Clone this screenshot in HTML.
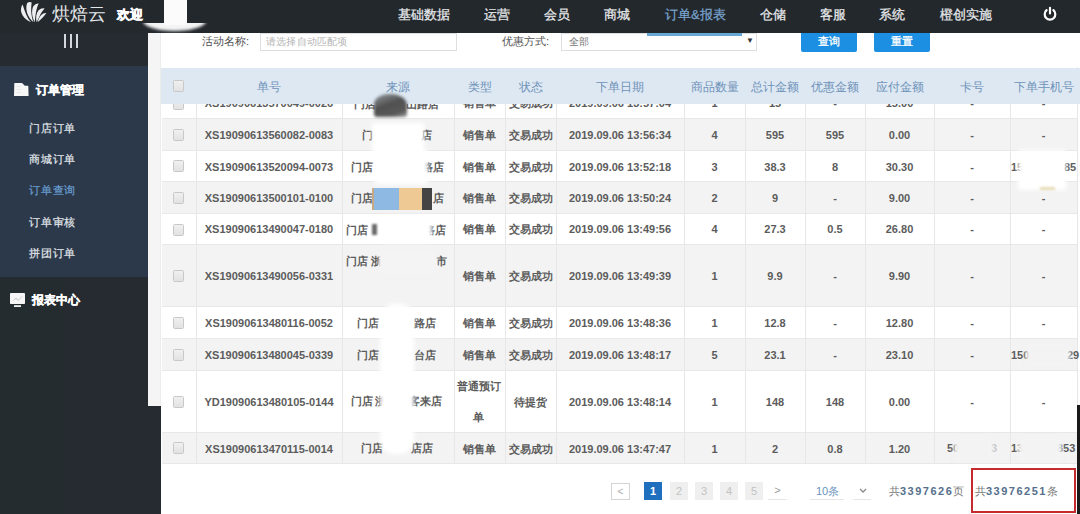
<!DOCTYPE html>
<html><head><meta charset="utf-8">
<style>
*{margin:0;padding:0;box-sizing:border-box}
html,body{width:1080px;height:514px;overflow:hidden;background:#fff;font-family:"Liberation Sans",sans-serif;position:relative}
.a{position:absolute;white-space:nowrap}
.nav{top:6px;font-size:13px;color:#e8eaec;line-height:17px;-webkit-text-stroke:0.25px}
.sub{font-size:11.4px;letter-spacing:0.8px;color:#e2e6ea;line-height:14px;left:29px;-webkit-text-stroke:0.2px}
.th{top:79.5px;font-size:12px;color:#6f92b8;line-height:15px;text-align:center}
.td{font-size:11px;font-weight:bold;color:#5c5c5c;text-align:center;line-height:14px}
.tds{font-size:11px;font-weight:bold;color:#5c5c5c;line-height:14px}
.cb{display:block;width:11px;height:12px;border:1px solid #c8c8c8;border-radius:1.5px;background:linear-gradient(#f0f0f0,#e2e2e2)}
.red{background:#fff;filter:blur(2px)}
</style></head><body>
<!-- sidebar -->
<div class="a" style="left:0;top:0;width:148px;height:66px;background:#252b31"></div>
<div class="a" style="left:0;top:66px;width:148px;height:211px;background:#2c394a"></div>
<div class="a" style="left:0;top:277px;width:161px;height:237px;background:#262b31"></div>
<div class="a" style="left:0;top:277px;width:63px;height:237px;background:#242c2f"></div>
<div class="a" style="left:148px;top:33px;width:13px;height:373px;background:#f5f5f6;border-right:1px solid #ececec"></div>
<!-- top bar -->
<div class="a" style="left:0;top:0;width:1080px;height:33px;background:#23282d"></div>
<div class="a" style="left:0;top:0;width:148px;height:33px;background:#24292e"></div>

<!-- logo -->
<svg class="a" style="left:0;top:0" width="60" height="30" viewBox="0 0 60 30">
<g fill="#eceef0">
<path d="M22.6,4.5 C19.5,9 20,17 31,22.3 C27,18 25,12 22.6,4.5 Z"/>
<path d="M27.2,3 Q29.2,1.4 31.7,2.4 C30.8,8 30.8,15 33.5,22.3 C27.5,17 24.8,9 27.2,3 Z"/>
<path d="M33.3,6.2 Q35.5,3 38.7,3.5 C36.4,8 35.4,15 34.8,22.3 C32,17 31.2,11 33.3,6.2 Z"/>
<path d="M38.6,10.2 Q41.5,7.6 44.6,8.4 C41.6,11 39.6,16 36.6,22.3 C35.5,17 36.4,13 38.6,10.2 Z"/>
<path d="M41,15.2 Q43.8,12.6 46.4,13.1 C44.2,16 41.8,19 37.6,22.3 C38.2,19.5 39.4,17 41,15.2 Z"/>
</g></svg>
<div class="a" style="left:52px;top:4px;font-size:18px;color:#e5e8eb;line-height:21px">烘焙云</div>
<div class="a" style="left:117px;top:6px;font-size:13px;color:#fff;font-weight:bold;line-height:17px;-webkit-text-stroke:0.5px #fff">欢迎</div>
<div class="a" style="left:140px;top:23px;width:70px;height:10px;overflow:hidden"><div class="a" style="left:3px;top:-12px;width:63px;height:20px;border-radius:50%;background:#f4f4f4;filter:blur(1.5px)"></div></div>
<div class="a" style="left:164px;top:0;width:23px;height:25px;background:#fbfbfb;filter:blur(0.6px)"></div>
<div class="a" style="left:64px;top:33.5px;width:2.2px;height:14px;background:#d4d8dc"></div>
<div class="a" style="left:69.8px;top:33.5px;width:2.2px;height:14px;background:#d4d8dc"></div>
<div class="a" style="left:75.6px;top:33.5px;width:2.2px;height:14px;background:#d4d8dc"></div>

<!-- nav -->
<div class="a nav" style="left:398px">基础数据</div>
<div class="a nav" style="left:484px">运营</div>
<div class="a nav" style="left:544px">会员</div>
<div class="a nav" style="left:604px">商城</div>
<div class="a nav" style="left:664.5px;color:#78a2cc;letter-spacing:0.3px">订单&amp;报表</div>
<div class="a nav" style="left:760px">仓储</div>
<div class="a nav" style="left:820px">客服</div>
<div class="a nav" style="left:879px">系统</div>
<div class="a nav" style="left:940px">橙创实施</div>
<svg class="a" style="left:1042px;top:6px" width="16" height="16" viewBox="0 0 16 16"><path d="M4.6 4.2 A5.3 5.3 0 1 0 11.4 4.2" fill="none" stroke="#fff" stroke-width="2.2" stroke-linecap="round"/><line x1="8" y1="1.8" x2="8" y2="7.5" stroke="#fff" stroke-width="2.2" stroke-linecap="round"/></svg>

<!-- sidebar menu -->
<svg class="a" style="left:14px;top:82.7px" width="15" height="13" viewBox="0 0 15 13"><path d="M0.3 0.3 Q0 0 0.8 0 H8 L10.8 2.7 H14.3 L14.6 13 H0 Z" fill="#f7f7f7"/><path d="M2.5 3.5 H7 M2.5 6.5 H7 M2.5 9.5 H7" stroke="#dcdfe2" stroke-width="0.6"/></svg>
<div class="a" style="left:36px;top:82.5px;font-size:12px;font-weight:bold;color:#fff;line-height:15px;-webkit-text-stroke:0.3px #fff">订单管理</div>
<div class="a sub" style="top:121px">门店订单</div>
<div class="a sub" style="top:152px">商城订单</div>
<div class="a sub" style="top:183px;color:#6a9fd2">订单查询</div>
<div class="a sub" style="top:215px">订单审核</div>
<div class="a sub" style="top:246px">拼团订单</div>
<svg class="a" style="left:10px;top:292.8px" width="15" height="14" viewBox="0 0 15 14"><rect x="0" y="0" width="15" height="11" rx="0.8" fill="#f6f6f6"/><rect x="4" y="12.2" width="7" height="1.8" fill="#f0f0f0"/><path d="M3.5 7.5 L6 5 L8 7.5 L12 3.5" stroke="#c4c8cc" stroke-width="1" fill="none"/></svg>
<div class="a" style="left:32px;top:292.5px;font-size:12px;font-weight:bold;color:#fff;line-height:15px;-webkit-text-stroke:0.3px #fff">报表中心</div>

<!-- filter bar -->
<div class="a" style="left:202px;top:34px;font-size:11px;color:#505050;line-height:14px">活动名称:</div>
<div class="a" style="left:260px;top:33px;width:197px;height:18px;border:1px solid #dedede;background:#fff"></div>
<div class="a" style="left:266px;top:35px;font-size:10px;letter-spacing:0.2px;color:#b4b4b4;line-height:13px">请选择自动匹配项</div>
<div class="a" style="left:502px;top:34px;font-size:11px;color:#505050;line-height:14px">优惠方式:</div>
<div class="a" style="left:561px;top:33px;width:196px;height:18px;border:1px solid #dedede;background:#fff"></div>
<div class="a" style="left:569px;top:35px;font-size:10px;letter-spacing:0.3px;color:#777;line-height:13px">全部</div>
<div class="a" style="left:746px;top:36px;font-size:8px;color:#333;line-height:10px">▼</div>
<div class="a" style="left:647px;top:33px;width:95px;height:2.5px;background:#67a9d4"></div>
<div class="a" style="left:801px;top:33px;width:56px;height:18.5px;background:#1c8fe3;border-radius:0 0 2px 2px;color:#fff;font-size:11px;line-height:16px;text-align:center;-webkit-text-stroke:0.3px #fff">查询</div>
<div class="a" style="left:874px;top:33px;width:56px;height:18.5px;background:#1c8fe3;border-radius:0 0 2px 2px;color:#fff;font-size:11px;line-height:16px;text-align:center;-webkit-text-stroke:0.3px #fff">重置</div>

<div class="a" style="left:162px;top:88px;width:915px;height:31px;background:#fff;border-bottom:1px solid #e8e8e8"></div>
<div class="a" style="left:162px;top:119px;width:915px;height:32px;background:#f3f3f3;border-bottom:1px solid #e8e8e8"></div>
<div class="a" style="left:162px;top:151px;width:915px;height:31px;background:#fff;border-bottom:1px solid #e8e8e8"></div>
<div class="a" style="left:162px;top:182px;width:915px;height:32px;background:#f3f3f3;border-bottom:1px solid #e8e8e8"></div>
<div class="a" style="left:162px;top:214px;width:915px;height:31px;background:#fff;border-bottom:1px solid #e8e8e8"></div>
<div class="a" style="left:162px;top:245px;width:915px;height:62px;background:#f3f3f3;border-bottom:1px solid #e8e8e8"></div>
<div class="a" style="left:162px;top:307px;width:915px;height:32px;background:#fff;border-bottom:1px solid #e8e8e8"></div>
<div class="a" style="left:162px;top:339px;width:915px;height:32px;background:#f3f3f3;border-bottom:1px solid #e8e8e8"></div>
<div class="a" style="left:162px;top:371px;width:915px;height:62px;background:#fff;border-bottom:1px solid #e8e8e8"></div>
<div class="a" style="left:162px;top:433px;width:915px;height:31px;background:#f3f3f3;border-bottom:1px solid #e8e8e8"></div>
<div class="a" style="left:196px;top:91px;width:1px;height:373px;background:#e7e7e7"></div>
<div class="a" style="left:342px;top:91px;width:1px;height:373px;background:#e7e7e7"></div>
<div class="a" style="left:454px;top:91px;width:1px;height:373px;background:#e7e7e7"></div>
<div class="a" style="left:505px;top:91px;width:1px;height:373px;background:#e7e7e7"></div>
<div class="a" style="left:556px;top:91px;width:1px;height:373px;background:#e7e7e7"></div>
<div class="a" style="left:684px;top:91px;width:1px;height:373px;background:#e7e7e7"></div>
<div class="a" style="left:745px;top:91px;width:1px;height:373px;background:#e7e7e7"></div>
<div class="a" style="left:805px;top:91px;width:1px;height:373px;background:#e7e7e7"></div>
<div class="a" style="left:865px;top:91px;width:1px;height:373px;background:#e7e7e7"></div>
<div class="a" style="left:934px;top:91px;width:1px;height:373px;background:#e7e7e7"></div>
<div class="a" style="left:1010px;top:91px;width:1px;height:373px;background:#e7e7e7"></div>
<div class="a" style="left:1077px;top:67px;width:1px;height:397px;background:#e7e7e7"></div>
<span class="a cb" style="left:173px;top:98px"></span>
<div class="a td" style="left:196px;width:146px;top:96px">XS19090613570049-0026</div>
<div class="a td" style="left:454px;width:51px;top:96px">销售单</div>
<div class="a td" style="left:505px;width:51px;top:96px">交易成功</div>
<div class="a td" style="left:556px;width:128px;top:96px">2019.09.06 13:57:04</div>
<div class="a td" style="left:684px;width:61px;top:96px">1</div>
<div class="a td" style="left:745px;width:60px;top:96px">15</div>
<div class="a td" style="left:805px;width:60px;top:96px">-</div>
<div class="a td" style="left:865px;width:69px;top:96px">15.00</div>
<div class="a td" style="left:934px;width:76px;top:96px">-</div>
<div class="a td" style="left:1010px;width:67px;top:96px">-</div>
<div class="a tds" style="left:354px;top:97px">门店</div>
<div class="a tds" style="left:406px;top:97px">山路店</div>
<span class="a cb" style="left:173px;top:129px"></span>
<div class="a td" style="left:196px;width:146px;top:128px">XS19090613560082-0083</div>
<div class="a td" style="left:454px;width:51px;top:128px">销售单</div>
<div class="a td" style="left:505px;width:51px;top:128px">交易成功</div>
<div class="a td" style="left:556px;width:128px;top:128px">2019.09.06 13:56:34</div>
<div class="a td" style="left:684px;width:61px;top:128px">4</div>
<div class="a td" style="left:745px;width:60px;top:128px">595</div>
<div class="a td" style="left:805px;width:60px;top:128px">595</div>
<div class="a td" style="left:865px;width:69px;top:128px">0.00</div>
<div class="a td" style="left:934px;width:76px;top:128px">-</div>
<div class="a td" style="left:1010px;width:67px;top:128px">-</div>
<div class="a tds" style="left:362px;top:128px">门</div>
<div class="a tds" style="left:421px;top:128px">店</div>
<span class="a cb" style="left:173px;top:160px"></span>
<div class="a td" style="left:196px;width:146px;top:160px">XS19090613520094-0073</div>
<div class="a td" style="left:454px;width:51px;top:160px">销售单</div>
<div class="a td" style="left:505px;width:51px;top:160px">交易成功</div>
<div class="a td" style="left:556px;width:128px;top:160px">2019.09.06 13:52:18</div>
<div class="a td" style="left:684px;width:61px;top:160px">3</div>
<div class="a td" style="left:745px;width:60px;top:160px">38.3</div>
<div class="a td" style="left:805px;width:60px;top:160px">8</div>
<div class="a td" style="left:865px;width:69px;top:160px">30.30</div>
<div class="a td" style="left:934px;width:76px;top:160px">-</div>
<div class="a tds" style="left:351px;top:160px">门店</div>
<div class="a tds" style="left:422px;top:160px">路店</div>
<span class="a cb" style="left:173px;top:192px"></span>
<div class="a td" style="left:196px;width:146px;top:191px">XS19090613500101-0100</div>
<div class="a td" style="left:454px;width:51px;top:191px">销售单</div>
<div class="a td" style="left:505px;width:51px;top:191px">交易成功</div>
<div class="a td" style="left:556px;width:128px;top:191px">2019.09.06 13:50:24</div>
<div class="a td" style="left:684px;width:61px;top:191px">2</div>
<div class="a td" style="left:745px;width:60px;top:191px">9</div>
<div class="a td" style="left:805px;width:60px;top:191px">-</div>
<div class="a td" style="left:865px;width:69px;top:191px">9.00</div>
<div class="a td" style="left:934px;width:76px;top:191px">-</div>
<div class="a td" style="left:1010px;width:67px;top:191px">-</div>
<div class="a tds" style="left:351px;top:191px">门店</div>
<div class="a tds" style="left:433px;top:191px">店</div>
<span class="a cb" style="left:173px;top:224px"></span>
<div class="a td" style="left:196px;width:146px;top:222px">XS19090613490047-0180</div>
<div class="a td" style="left:454px;width:51px;top:222px">销售单</div>
<div class="a td" style="left:505px;width:51px;top:222px">交易成功</div>
<div class="a td" style="left:556px;width:128px;top:222px">2019.09.06 13:49:56</div>
<div class="a td" style="left:684px;width:61px;top:222px">4</div>
<div class="a td" style="left:745px;width:60px;top:222px">27.3</div>
<div class="a td" style="left:805px;width:60px;top:222px">0.5</div>
<div class="a td" style="left:865px;width:69px;top:222px">26.80</div>
<div class="a td" style="left:934px;width:76px;top:222px">-</div>
<div class="a td" style="left:1010px;width:67px;top:222px">-</div>
<div class="a tds" style="left:346px;top:223px">门店</div>
<div class="a tds" style="left:424px;top:223px">路店</div>
<span class="a cb" style="left:173px;top:270px"></span>
<div class="a td" style="left:196px;width:146px;top:269px">XS19090613490056-0331</div>
<div class="a td" style="left:454px;width:51px;top:269px">销售单</div>
<div class="a td" style="left:505px;width:51px;top:269px">交易成功</div>
<div class="a td" style="left:556px;width:128px;top:269px">2019.09.06 13:49:39</div>
<div class="a td" style="left:684px;width:61px;top:269px">1</div>
<div class="a td" style="left:745px;width:60px;top:269px">9.9</div>
<div class="a td" style="left:805px;width:60px;top:269px">-</div>
<div class="a td" style="left:865px;width:69px;top:269px">9.90</div>
<div class="a td" style="left:934px;width:76px;top:269px">-</div>
<div class="a td" style="left:1010px;width:67px;top:269px">-</div>
<div class="a tds" style="left:346px;top:254px">门店</div>
<div class="a tds" style="left:371px;top:254px">浙</div>
<div class="a tds" style="left:436px;top:254px">市</div>
<span class="a cb" style="left:173px;top:317px"></span>
<div class="a td" style="left:196px;width:146px;top:316px">XS19090613480116-0052</div>
<div class="a td" style="left:454px;width:51px;top:316px">销售单</div>
<div class="a td" style="left:505px;width:51px;top:316px">交易成功</div>
<div class="a td" style="left:556px;width:128px;top:316px">2019.09.06 13:48:36</div>
<div class="a td" style="left:684px;width:61px;top:316px">1</div>
<div class="a td" style="left:745px;width:60px;top:316px">12.8</div>
<div class="a td" style="left:805px;width:60px;top:316px">-</div>
<div class="a td" style="left:865px;width:69px;top:316px">12.80</div>
<div class="a td" style="left:934px;width:76px;top:316px">-</div>
<div class="a td" style="left:1010px;width:67px;top:316px">-</div>
<div class="a tds" style="left:357px;top:316px">门店</div>
<div class="a tds" style="left:414px;top:316px">路店</div>
<span class="a cb" style="left:173px;top:349px"></span>
<div class="a td" style="left:196px;width:146px;top:348px">XS19090613480045-0339</div>
<div class="a td" style="left:454px;width:51px;top:348px">销售单</div>
<div class="a td" style="left:505px;width:51px;top:348px">交易成功</div>
<div class="a td" style="left:556px;width:128px;top:348px">2019.09.06 13:48:17</div>
<div class="a td" style="left:684px;width:61px;top:348px">5</div>
<div class="a td" style="left:745px;width:60px;top:348px">23.1</div>
<div class="a td" style="left:805px;width:60px;top:348px">-</div>
<div class="a td" style="left:865px;width:69px;top:348px">23.10</div>
<div class="a td" style="left:934px;width:76px;top:348px">-</div>
<div class="a tds" style="left:357px;top:348px">门店</div>
<div class="a tds" style="left:414px;top:348px">台店</div>
<span class="a cb" style="left:173px;top:396px"></span>
<div class="a td" style="left:196px;width:146px;top:395px">YD19090613480105-0144</div>
<div class="a td" style="left:505px;width:51px;top:395px">待提货</div>
<div class="a td" style="left:556px;width:128px;top:395px">2019.09.06 13:48:14</div>
<div class="a td" style="left:684px;width:61px;top:395px">1</div>
<div class="a td" style="left:745px;width:60px;top:395px">148</div>
<div class="a td" style="left:805px;width:60px;top:395px">148</div>
<div class="a td" style="left:865px;width:69px;top:395px">0.00</div>
<div class="a td" style="left:934px;width:76px;top:395px">-</div>
<div class="a td" style="left:1010px;width:67px;top:395px">-</div>
<div class="a tds" style="left:351px;top:394px">门店</div>
<div class="a tds" style="left:375px;top:394px">浙</div>
<div class="a tds" style="left:409px;top:394px">客来店</div>
<span class="a cb" style="left:173px;top:442px"></span>
<div class="a td" style="left:196px;width:146px;top:442px">XS19090613470115-0014</div>
<div class="a td" style="left:454px;width:51px;top:442px">销售单</div>
<div class="a td" style="left:505px;width:51px;top:442px">交易成功</div>
<div class="a td" style="left:556px;width:128px;top:442px">2019.09.06 13:47:47</div>
<div class="a td" style="left:684px;width:61px;top:442px">1</div>
<div class="a td" style="left:745px;width:60px;top:442px">2</div>
<div class="a td" style="left:805px;width:60px;top:442px">0.8</div>
<div class="a td" style="left:865px;width:69px;top:442px">1.20</div>
<div class="a tds" style="left:361px;top:441px">门店</div>
<div class="a tds" style="left:411px;top:441px">店店</div>
<!-- type col row8 two lines -->
<div class="a tds" style="left:457px;top:379px">普通预订</div>
<div class="a tds" style="left:473px;top:410px">单</div>
<!-- phone/card partial -->
<div class="a tds" style="left:1011px;top:160px">15</div>
<div class="a tds" style="left:1064px;top:160px">85</div>
<div class="a tds" style="left:1011px;top:348px">150</div>
<div class="a tds" style="left:1067px;top:348px">29</div>
<div class="a tds" style="left:947px;top:441px">50</div>
<div class="a tds" style="left:991px;top:441px;color:#c8c8c8">3</div>
<div class="a tds" style="left:1011px;top:441px">13</div>
<div class="a tds" style="left:1057px;top:441px">853</div>
<!-- redactions -->
<div class="a red" style="left:1018px;top:150px;width:48px;height:40px"></div>
<div class="a" style="left:1040px;top:187px;width:15px;height:3px;background:#e6dcb8;filter:blur(0.9px)"></div>
<div class="a" style="left:1026px;top:343px;width:44px;height:24px;background:#f3f3f3;filter:blur(2px)"></div>
<div class="a" style="left:954px;top:437px;width:38px;height:24px;background:#f3f3f3;filter:blur(2px)"></div>
<div class="a" style="left:1018px;top:437px;width:44px;height:24px;background:#f3f3f3;filter:blur(2px)"></div>
<div class="a red" style="left:372px;top:123px;width:52px;height:30px"></div>
<div class="a red" style="left:375px;top:150px;width:53px;height:34px"></div>
<div class="a red" style="left:379px;top:216px;width:53px;height:26px"></div>
<div class="a" style="left:372px;top:224px;width:5px;height:11px;background:#6a6a6a;filter:blur(0.8px)"></div>
<div class="a" style="left:379px;top:250px;width:58px;height:24px;background:#f4f4f4;filter:blur(1px)"></div>
<div class="a red" style="left:380px;top:304px;width:34px;height:150px;border-radius:14px"></div>
<div class="a" style="left:374px;top:94px;width:33px;height:23px;background:linear-gradient(160deg,rgba(90,90,90,0.55),#505050 45%,#5a5a5a 80%,rgba(120,120,120,0.7));filter:blur(1.8px);border-radius:45% 50% 3px 3px;z-index:5"></div>
<div class="a" style="left:372px;top:188px;width:3px;height:22px;background:#c9a884"></div>
<div class="a" style="left:374px;top:188px;width:25px;height:22px;background:#8db9e3"></div>
<div class="a" style="left:399px;top:188px;width:23px;height:22px;background:#eec993"></div>
<div class="a" style="left:422px;top:188px;width:10px;height:22px;background:#444"></div>


<!-- table header -->
<div class="a" style="left:161px;top:68px;width:919px;height:36px;background:#dde8f3"></div>
<span class="a cb" style="left:173px;top:80px"></span>
<div class="a th" style="left:196px;width:146px">单号</div>
<div class="a th" style="left:342px;width:112px">来源</div>
<div class="a th" style="left:454px;width:51px">类型</div>
<div class="a th" style="left:505px;width:51px">状态</div>
<div class="a th" style="left:556px;width:128px">下单日期</div>
<div class="a th" style="left:684px;width:61px">商品数量</div>
<div class="a th" style="left:745px;width:60px">总计金额</div>
<div class="a th" style="left:805px;width:60px">优惠金额</div>
<div class="a th" style="left:865px;width:69px">应付金额</div>
<div class="a th" style="left:934px;width:76px">卡号</div>
<div class="a th" style="left:1009px;width:70px">下单手机号</div>

<!-- pagination -->
<div class="a" style="left:611px;top:483px;width:19px;height:17px;border:1px solid #d4d4d4;color:#aaa;font-size:10px;text-align:center;line-height:15px">&lt;</div>
<div class="a" style="left:644px;top:482px;width:18px;height:18px;background:#1f6fbf;color:#fff;font-size:11px;font-weight:bold;text-align:center;line-height:18px">1</div>
<div class="a" style="left:670px;top:482px;width:18px;height:18px;background:#efefef;color:#c2c2c2;font-size:11px;text-align:center;line-height:18px">2</div>
<div class="a" style="left:695px;top:482px;width:18px;height:18px;background:#efefef;color:#c2c2c2;font-size:11px;text-align:center;line-height:18px">3</div>
<div class="a" style="left:720px;top:482px;width:18px;height:18px;background:#efefef;color:#c2c2c2;font-size:11px;text-align:center;line-height:18px">4</div>
<div class="a" style="left:745px;top:482px;width:18px;height:18px;background:#efefef;color:#c2c2c2;font-size:11px;text-align:center;line-height:18px">5</div>
<div class="a" style="left:768px;top:482px;width:19px;height:18px;color:#999;font-size:11px;text-align:center;line-height:17px;border-bottom:1px solid #e6e6e6">&gt;</div>
<div class="a" style="left:810px;top:482px;width:34px;height:18px;border-bottom:1px solid #e6e6e6"></div><div class="a" style="left:816px;top:484px;font-size:11px;color:#6a93c0;line-height:14px">10条</div>
<div class="a" style="left:853px;top:482px;width:18px;height:18px;border-bottom:1px solid #e6e6e6"></div><svg class="a" style="left:859px;top:488px" width="8" height="5" viewBox="0 0 8 5"><path d="M1 1 L4 4 L7 1" stroke="#8a8a8a" stroke-width="1.3" fill="none"/></svg>
<div class="a" style="left:889px;top:484px;font-size:11px;color:#777;line-height:14px">共<b style="color:#566f8c;letter-spacing:1.5px">3397626</b>页</div>
<div class="a" style="left:975px;top:484px;font-size:11px;color:#777;line-height:14px">共<b style="color:#566f8c;letter-spacing:1.5px">33976251</b>条</div>
<div class="a" style="left:971px;top:468px;width:105px;height:45px;border:2px solid #c52a2e"></div>
<div class="a" style="left:1077px;top:405px;width:3px;height:109px;background:#1a1a1a"></div>
</body></html>
